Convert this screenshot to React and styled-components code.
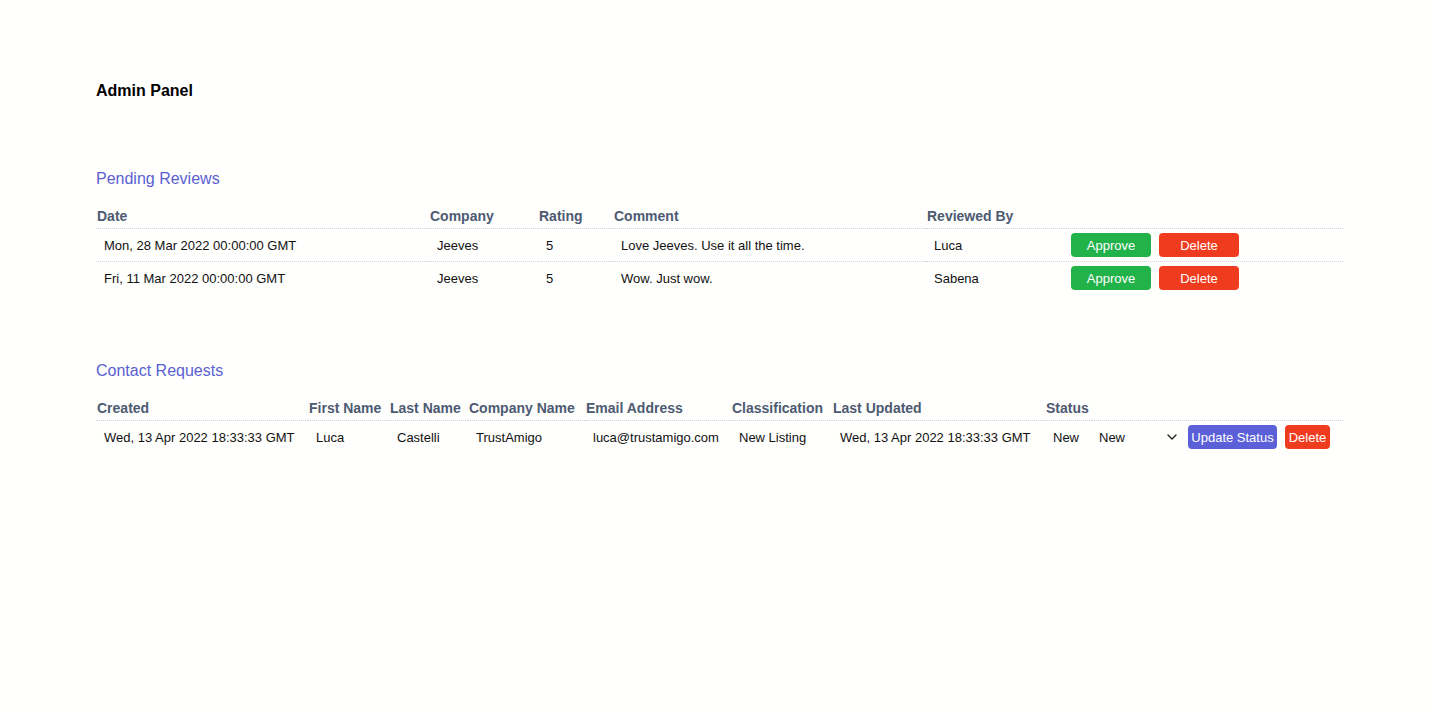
import styled, { createGlobalStyle } from 'styled-components';

const GlobalStyle = createGlobalStyle`
  body {
    margin: 0;
    background: #fffffd;
    font-family: "Liberation Sans", Arial, Helvetica, sans-serif;
    color: #111;
  }
`;

const reviews = [
  { date: 'Mon, 28 Mar 2022 00:00:00 GMT', company: 'Jeeves', rating: 5, comment: 'Love Jeeves. Use it all the time.', by: 'Luca' },
  { date: 'Fri, 11 Mar 2022 00:00:00 GMT', company: 'Jeeves', rating: 5, comment: 'Wow. Just wow.', by: 'Sabena' },
];

const contacts = [
  {
    created: 'Wed, 13 Apr 2022 18:33:33 GMT',
    first: 'Luca',
    last: 'Castelli',
    company: 'TrustAmigo',
    email: 'luca@trustamigo.com',
    classification: 'New Listing',
    updated: 'Wed, 13 Apr 2022 18:33:33 GMT',
    status: 'New',
  },
];

export default function App() {
  return (
    <>
      <GlobalStyle />
      <Page>
        <Title>Admin Panel</Title>

        <Section>
          <SectionTitle>Pending Reviews</SectionTitle>
          <Table>
            <colgroup>
              <col style={{ width: 333 }} />
              <col style={{ width: 109 }} />
              <col style={{ width: 75 }} />
              <col style={{ width: 313 }} />
              <col style={{ width: 138 }} />
              <col />
            </colgroup>
            <thead>
              <tr>
                <Th>Date</Th>
                <Th>Company</Th>
                <Th>Rating</Th>
                <Th>Comment</Th>
                <Th>Reviewed By</Th>
                <Th />
              </tr>
            </thead>
            <tbody>
              {reviews.map((r) => (
                <Tr key={r.date}>
                  <Td>{r.date}</Td>
                  <Td>{r.company}</Td>
                  <Td>{r.rating}</Td>
                  <Td>{r.comment}</Td>
                  <Td>{r.by}</Td>
                  <Td>
                    <Actions>
                      <Button $variant="approve" $w={80}>Approve</Button>
                      <Button $variant="delete" $w={80}>Delete</Button>
                    </Actions>
                  </Td>
                </Tr>
              ))}
            </tbody>
          </Table>
        </Section>

        <Section>
          <SectionTitle>Contact Requests</SectionTitle>
          <Table>
            <colgroup>
              <col style={{ width: 212 }} />
              <col style={{ width: 81 }} />
              <col style={{ width: 79 }} />
              <col style={{ width: 117 }} />
              <col style={{ width: 146 }} />
              <col style={{ width: 101 }} />
              <col style={{ width: 213 }} />
              <col style={{ width: 47 }} />
              <col />
            </colgroup>
            <thead>
              <tr>
                <Th>Created</Th>
                <Th>First Name</Th>
                <Th>Last Name</Th>
                <Th>Company Name</Th>
                <Th>Email Address</Th>
                <Th>Classification</Th>
                <Th>Last Updated</Th>
                <Th>Status</Th>
                <Th />
              </tr>
            </thead>
            <tbody>
              {contacts.map((c) => (
                <Tr key={c.email}>
                  <Td>{c.created}</Td>
                  <Td>{c.first}</Td>
                  <Td>{c.last}</Td>
                  <Td>{c.company}</Td>
                  <Td>{c.email}</Td>
                  <Td>{c.classification}</Td>
                  <Td>{c.updated}</Td>
                  <Td>{c.status}</Td>
                  <Td>
                    <Actions>
                      <SelectWrap>
                        <Select defaultValue={c.status}>
                          <option>New</option>
                          <option>In Progress</option>
                          <option>Closed</option>
                        </Select>
                        <Chevron width="10" height="6" viewBox="0 0 10 6">
                          <path d="M1 1l4 4 4-4" fill="none" stroke="#222" strokeWidth="1.4" strokeLinecap="round" strokeLinejoin="round" />
                        </Chevron>
                      </SelectWrap>
                      <Button $variant="update" $w={89}>Update Status</Button>
                      <Button $variant="delete" $w={45}>Delete</Button>
                    </Actions>
                  </Td>
                </Tr>
              ))}
            </tbody>
          </Table>
        </Section>
      </Page>
    </>
  );
}

const Page = styled.div`
  padding: 81px 95px 0 96px;
`;

const Title = styled.h1`
  margin: 0;
  font-size: 16px;
  line-height: 20px;
  font-weight: bold;
  color: #000;
`;

const Section = styled.section`
  margin-top: 68px;
  & + & {
    margin-top: 67px;
  }
`;

const SectionTitle = styled.h2`
  margin: 0 0 19px;
  font-size: 16px;
  line-height: 20px;
  font-weight: normal;
  color: #5a5fd2;
`;

const Table = styled.table`
  width: 100%;
  table-layout: fixed;
  border-collapse: collapse;
`;

const Th = styled.th`
  text-align: left;
  padding: 0 0 3px 1px;
  font-size: 14px;
  line-height: 17px;
  font-weight: bold;
  color: #4d5a72;
  white-space: nowrap;
  border-bottom: 1px dotted #cfd3d8;
`;

const Tr = styled.tr`
  & + & {
    border-top: 1px dotted #cfd3d8;
  }
`;

const Td = styled.td`
  padding: 0 8px;
  height: 32px;
  font-size: 13px;
  color: #111;
  white-space: nowrap;
  vertical-align: middle;
`;

const Actions = styled.div`
  display: flex;
  align-items: center;
  gap: 8px;
  margin-left: -1px;
`;

const colors = {
  approve: '#22b24a',
  delete: '#f03c1e',
  update: '#5b5fd8',
};

const Button = styled.button`
  width: ${(p) => p.$w}px;
  height: 24px;
  padding: 0;
  border: none;
  border-radius: 4px;
  background: ${(p) => colors[p.$variant]};
  color: #fff;
  font-family: inherit;
  font-size: 13px;
  cursor: pointer;
`;

const SelectWrap = styled.div`
  position: relative;
  width: 81px;
`;

const Select = styled.select`
  appearance: none;
  width: 100%;
  border: none;
  background: transparent;
  font-family: inherit;
  font-size: 13px;
  color: #111;
  padding: 2px 0;
  outline: none;
`;

const Chevron = styled.svg`
  position: absolute;
  right: 3px;
  top: 50%;
  transform: translateY(-50%);
  pointer-events: none;
`;
